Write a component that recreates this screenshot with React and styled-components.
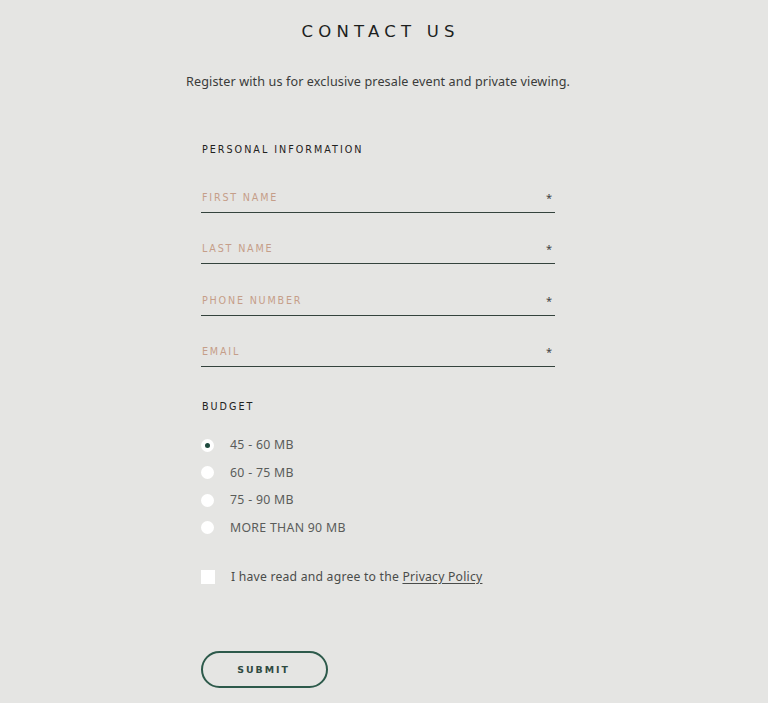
import React, { useState } from "react";
import styled, { createGlobalStyle } from "styled-components";

const Global = createGlobalStyle`
  html, body { margin: 0; padding: 0; background: #e5e5e3; }
  body { font-family: "Noto Sans", "Open Sans", sans-serif; }
  * { box-sizing: border-box; }
`;

const Page = styled.div`
  width: 768px;
  min-height: 703px;
  padding: 20px 12px 0 0;
  display: flex;
  flex-direction: column;
  align-items: center;
`;

const Title = styled.h1`
  margin: 0;
  font-family: "DejaVu Sans", sans-serif;
  font-weight: 500;
  font-size: 16.5px;
  line-height: 24px;
  letter-spacing: 5.2px;
  color: #1d1f1e;
  padding-left: 5.2px;
`;

const Subtitle = styled.p`
  margin: 29px 0 0;
  font-size: 12.6px;
  line-height: 18px;
  letter-spacing: 0.12px;
  color: #3a3b3a;
`;

const Form = styled.form`
  width: 354px;
  margin-top: 52px;
  display: flex;
  flex-direction: column;
`;

const SectionLabel = styled.div`
  font-family: "DejaVu Sans", sans-serif;
  font-size: 9.6px;
  line-height: 14px;
  letter-spacing: 2px;
  color: #1f2220;
  padding-left: 1px;
  margin-top: ${(p) => p.$mt || 0}px;
`;

const Field = styled.label`
  display: flex;
  justify-content: space-between;
  align-items: flex-end;
  margin-top: ${(p) => p.$mt}px;
  padding: 0 3px 7px 1px;
  border-bottom: 1.5px solid #34433d;
  height: 24.5px;
`;

const FieldLabel = styled.span`
  font-family: "DejaVu Sans", sans-serif;
  font-size: 9.6px;
  line-height: 14px;
  letter-spacing: 1.8px;
  color: #c59e89;
`;

const Asterisk = styled.span`
  font-size: 11px;
  line-height: 14px;
  color: #444;
`;

const RadioList = styled.div`
  display: flex;
  flex-direction: column;
  gap: 9.5px;
  margin-top: 22px;
`;

const RadioRow = styled.label`
  display: flex;
  align-items: center;
  height: 18px;
  cursor: pointer;
`;

const RadioCircle = styled.span`
  width: 13px;
  height: 13px;
  border-radius: 50%;
  background: #ffffff;
  display: flex;
  align-items: center;
  justify-content: center;
  margin-right: 16px;
  &::after {
    content: "";
    width: 5px;
    height: 5px;
    border-radius: 50%;
    background: ${(p) => (p.$checked ? "#1f4a3e" : "transparent")};
  }
`;

const OptionText = styled.span`
  font-size: 12.3px;
  line-height: 18px;
  letter-spacing: 0.3px;
  color: #5a5c5a;
`;

const CheckRow = styled.label`
  display: flex;
  align-items: center;
  height: 18px;
  margin-top: 31px;
`;

const CheckBox = styled.span`
  width: 14px;
  height: 14px;
  background: #ffffff;
  margin-right: 16px;
`;

const CheckText = styled.span`
  font-size: 12.2px;
  line-height: 18px;
  letter-spacing: 0.22px;
  color: #4a4c4a;
`;

const Link = styled.a`
  color: #4a4c4a;
  text-decoration: underline;
  text-underline-offset: 2px;
`;

const Submit = styled.button`
  margin-top: 65px;
  width: 127px;
  height: 37px;
  border-radius: 19px;
  border: 2px solid #2d5a4b;
  background: transparent;
  font-family: "DejaVu Sans", sans-serif;
  font-weight: bold;
  font-size: 9.4px;
  letter-spacing: 2px;
  padding-left: 4px;
  color: #2f4a41;
  cursor: pointer;
  align-self: flex-start;
`;

const fields = ["FIRST NAME", "LAST NAME", "PHONE NUMBER", "EMAIL"];
const budgets = ["45 - 60 MB", "60 - 75 MB", "75 - 90 MB", "MORE THAN 90 MB"];

export default function App() {
  const [budget, setBudget] = useState(0);
  return (
    <>
      <Global />
      <Page>
        <Title>CONTACT US</Title>
        <Subtitle>Register with us for exclusive presale event and private viewing.</Subtitle>
        <Form onSubmit={(e) => e.preventDefault()}>
          <SectionLabel>PERSONAL INFORMATION</SectionLabel>
          {fields.map((f, i) => (
            <Field key={f} $mt={i === 0 ? 31 : 27}>
              <FieldLabel>{f}</FieldLabel>
              <Asterisk>*</Asterisk>
            </Field>
          ))}
          <SectionLabel $mt={33}>BUDGET</SectionLabel>
          <RadioList>
            {budgets.map((b, i) => (
              <RadioRow key={b} onClick={() => setBudget(i)}>
                <RadioCircle $checked={budget === i} />
                <OptionText>{b}</OptionText>
              </RadioRow>
            ))}
          </RadioList>
          <CheckRow>
            <CheckBox />
            <CheckText>
              I have read and agree to the <Link href="#">Privacy Policy</Link>
            </CheckText>
          </CheckRow>
          <Submit type="submit">SUBMIT</Submit>
        </Form>
      </Page>
    </>
  );
}
